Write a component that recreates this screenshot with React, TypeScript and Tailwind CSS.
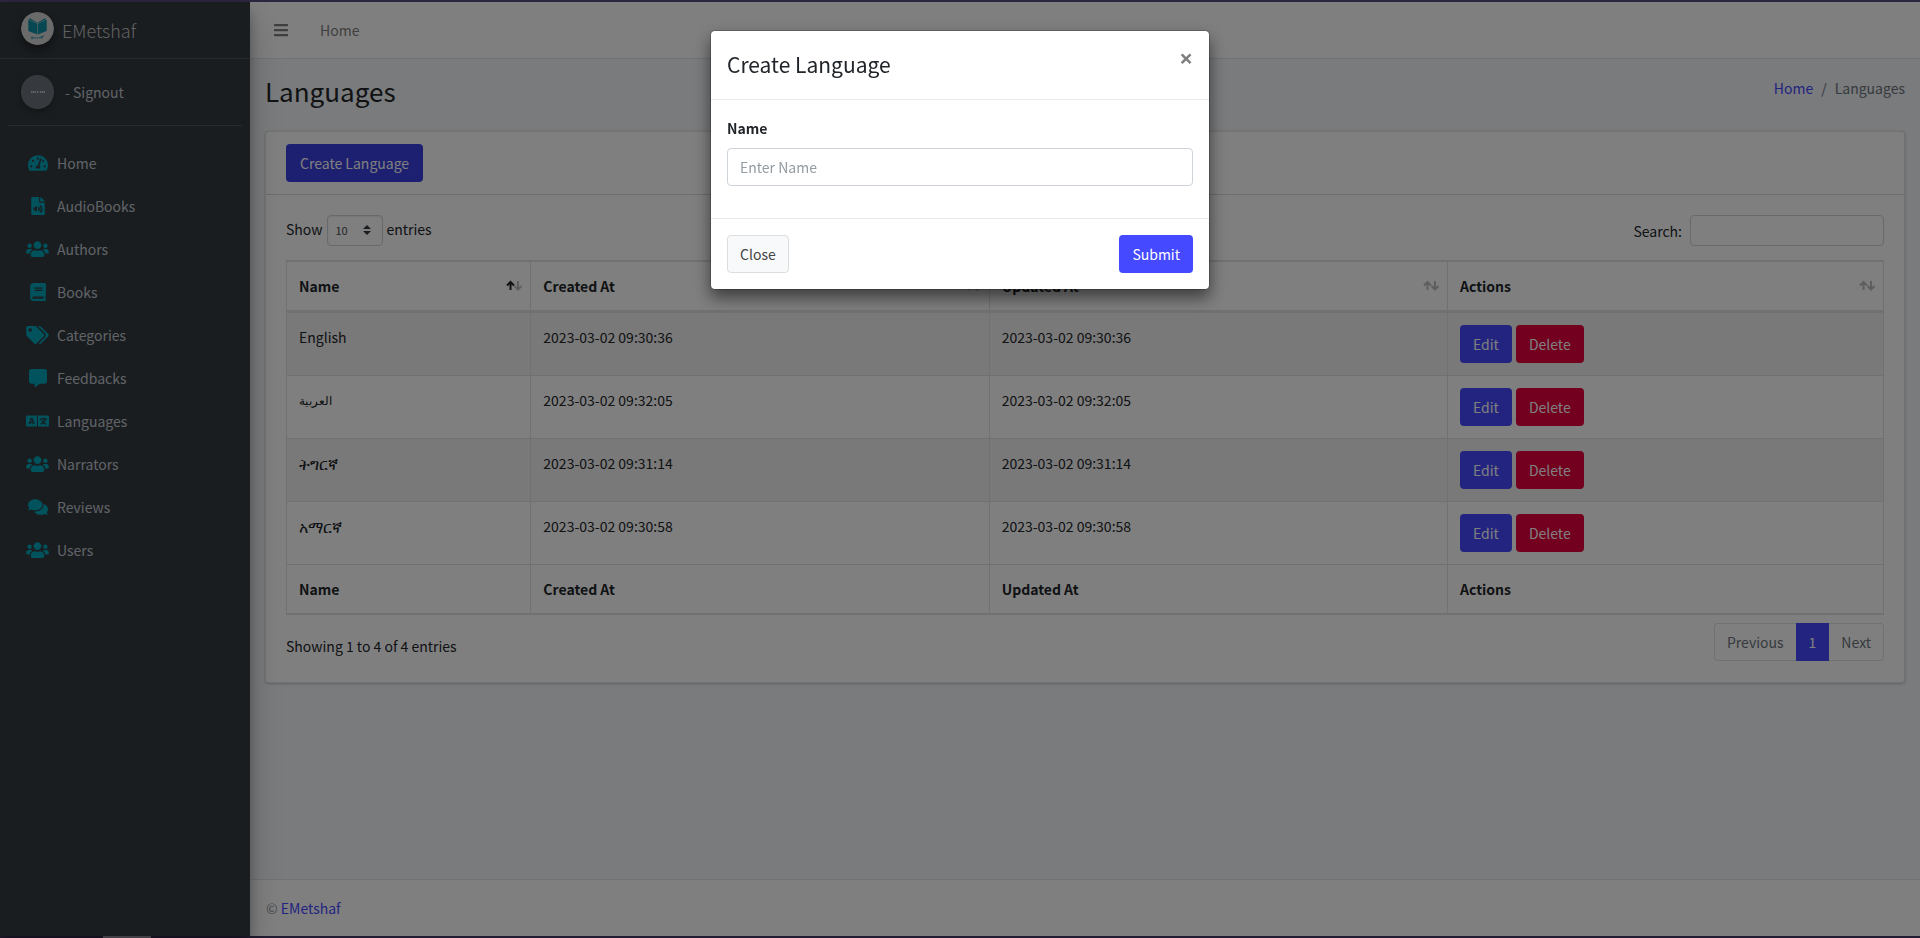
import {
  FaBars, FaBook, FaComments, FaFileAudio, FaTachometerAlt, FaTags, FaUsers,
} from 'react-icons/fa';
import { FaMessage } from 'react-icons/fa6';
import type { ComponentType } from 'react';

function LanguageBoxes({ className }: { className?: string }) {
  return (
    <svg className={className} viewBox="0 0 23 12" fill="currentColor" aria-hidden="true">
      <path
        fillRule="evenodd"
        d="M1 0.5h10v11H1a1 1 0 0 1-1-1v-9a1 1 0 0 1 1-1zM4.8 2.7 2.5 9.2h1.6l.4-1.2h2.2l.4 1.2h1.6L6.4 2.7zM5.6 4.5l.7 2.2H4.9z"
      />
      <path d="M12 .5h10a1 1 0 0 1 1 1v9a1 1 0 0 1-1 1H12z" />
      <path
        d="M17.4 2.4v1.5M14 4.2h6.9M19.3 4.4c-.5 2.200-2.100 3.900-4.700 4.800M15.700 5.600c.7 1.700 2.200 3 4.600 3.700"
        stroke="#343a40"
        strokeWidth="1.300"
        fill="none"
      />
    </svg>
  );
}

type Item = { label: string; icon: ComponentType<{ className?: string }>; size: string };

const items: Item[] = [
  { label: 'Home', icon: FaTachometerAlt, size: 'h-[18px] w-5' },
  { label: 'AudioBooks', icon: FaFileAudio, size: 'h-[18px] w-[18px]' },
  { label: 'Authors', icon: FaUsers, size: 'h-[18px] w-[23px]' },
  { label: 'Books', icon: FaBook, size: 'h-[18px] w-[18px]' },
  { label: 'Categories', icon: FaTags, size: 'h-[18px] w-[23px]' },
  { label: 'Feedbacks', icon: FaMessage, size: 'h-[18px] w-[18px]' },
  { label: 'Languages', icon: LanguageBoxes, size: 'h-3 w-[23px]' },
  { label: 'Narrators', icon: FaUsers, size: 'h-[18px] w-[23px]' },
  { label: 'Reviews', icon: FaComments, size: 'h-[18px] w-5' },
  { label: 'Users', icon: FaUsers, size: 'h-[18px] w-[23px]' },
];

const rows = [
  { name: 'English', date: '2023-03-02 09:30:36', size: 'text-sm leading-6' },
  { name: 'العربية', date: '2023-03-02 09:32:05', size: 'text-xs leading-6' },
  { name: 'ትግርኛ', date: '2023-03-02 09:31:14', size: 'text-base leading-6' },
  { name: 'አማርኛ', date: '2023-03-02 09:30:58', size: 'text-base leading-6' },
];

const columns = ['Name', 'Created At', 'Updated At', 'Actions'];

function Logo() {
  return (
    <svg className="h-[33px] w-[33px] rounded-full shadow-[0_6px_8px_rgba(0,0,0,0.4)]" viewBox="0 0 33 33" aria-hidden="true">
      <circle cx="16.5" cy="16.5" r="16.5" fill="#d5d5d5" />
      <path d="M7.300 7.500l1.200.5v-2l7.700 4.500v12L7.300 19zM25.700 7.500l-1.200.5v-2l-7.700 4.500v12l8.900-3.500z" fill="#0d8fa3" />
      <path d="M8.500 8l7.700 3.500M24.500 8l-7.700 3.500" stroke="#d5d5d5" strokeWidth="0.500" />
      <path
        d="M10 25.500c1-1.500 2-.5 1 .5s.5 1 1.500 0 1.500 0 2 0 1-1 1.500 0 1 0 1.500-.5 1 1 2 0 1-2 1.500-1-1 2.500-.5 1.500 1-2 2.500-2"
        stroke="#0d8fa3"
        strokeWidth="0.900"
        fill="none"
      />
    </svg>
  );
}

function SortArrows({ active }: { active: boolean }) {
  return (
    <svg className="h-3 w-4 shrink-0" viewBox="0 0 16 12" fill="none" stroke="#212529" strokeWidth="2" aria-hidden="true">
      <path d="M4.500 10V2M1 5.500l3.500-3.500L8 5.500" strokeOpacity={active ? 1 : 0.3} />
      <path d="M12 1v8.500M8.500 6L12 9.500 15.500 6" strokeOpacity="0.3" />
    </svg>
  );
}

function Sidebar() {
  return (
    <aside className="z-10 flex w-[250px] shrink-0 flex-col bg-[#343a40] text-[#c2c7d0] shadow-[0_14px_28px_rgba(0,0,0,0.25),0_10px_10px_rgba(0,0,0,0.22)]">
      <a href="#" className="flex h-[57px] items-center gap-2 border-b border-[#4b545c] pb-1 pl-[21px] text-lg text-white/70">
        <Logo />
        <span className="pt-1 font-light">EMetshaf</span>
      </a>
      <div className="mx-2 flex h-[67px] items-center gap-[11px] border-b border-[#4f5962] pl-[13px]">
        <span className="flex h-[34px] w-[33px] items-center justify-center rounded-full bg-[#6c757d] shadow-[0_3px_6px_rgba(0,0,0,0.3)]">
          <svg className="h-1 w-4" viewBox="0 0 16 4" aria-hidden="true">
            <path d="M1 2h5M7 2h2M10 2h5" stroke="#c2c7d0" strokeWidth="2" strokeDasharray="1.500 .5" />
          </svg>
        </span>
        <a href="#">- Signout</a>
      </div>
      <nav className="flex flex-col gap-[3px] px-2 pt-[17px]">
        {items.map(({ label, icon: Icon, size }) => (
          <a key={label} href="#" className="flex h-10 items-center gap-1.5 px-4">
            <span className="flex w-[27px] justify-center text-[#00a5b8]">
              <Icon className={size} />
            </span>
            <span>{label}</span>
          </a>
        ))}
      </nav>
    </aside>
  );
}

function Entries() {
  return (
    <section className="mx-[15px] rounded border border-black/10 bg-white shadow-[0_0_1px_rgba(0,0,0,0.13),0_1px_3px_rgba(0,0,0,0.2)]">
      <div className="border-b border-black/15 px-5 py-3">
        <button type="button" className="h-[38px] rounded bg-[#3b40e0] px-3.5 text-white">Create Language</button>
      </div>
      <div className="px-5 pt-5 pb-[21px]">
        <div className="flex items-center justify-between">
          <div className="flex items-center gap-1">
            <label htmlFor="length" className="pb-1">Show</label>
            <span className="relative flex">
              <select id="length" className="h-[31px] w-14 appearance-none rounded border border-[#ced4da] bg-white px-2 pb-0.5 text-[11px] text-[#495057] shadow-[inset_0_1px_2px_rgba(0,0,0,0.08)]">
                <option>10</option>
              </select>
              <svg className="pointer-events-none absolute top-[10px] right-3 h-[10px] w-2" viewBox="0 0 8 10" fill="#343a40" aria-hidden="true">
                <path d="M4 0L0 4h8zM4 10L0 6h8z" />
              </svg>
            </span>
            <span className="pb-1">entries</span>
          </div>
          <label className="flex items-center gap-2">
            Search:
            <input type="search" className="h-[31px] w-[194px] rounded border border-[#ced4da] bg-white px-2" />
          </label>
        </div>
        <table className="mt-[14px] w-full table-fixed border-separate border-spacing-0 border-t-2 border-r border-b-2 border-[#dee2e6] text-left">
          <colgroup>
            <col className="w-[15.300%]" />
            <col className="w-[28.700%]" />
            <col className="w-[28.700%]" />
            <col />
          </colgroup>
          <thead>
            <tr>
              {columns.map((name, i) => (
                <th key={name} className="h-[51px] border-b-3 border-l border-[#dee2e6] pr-2 pl-3 font-bold">
                  <span className="flex items-center justify-between">
                    {name}
                    <SortArrows active={i === 0} />
                  </span>
                </th>
              ))}
            </tr>
          </thead>
          <tbody>
            {rows.map(({ name, date, size }) => (
              <tr key={name} className="odd:bg-black/5">
                <td className="border-b border-l border-[#dee2e6] px-3 py-3 align-top">
                  <div className={size}>{name}</div>
                </td>
                <td className="border-b border-l border-[#dee2e6] px-3 py-3 align-top">{date}</td>
                <td className="border-b border-l border-[#dee2e6] px-3 py-3 align-top">{date}</td>
                <td className="border-b border-l border-[#dee2e6] px-3 py-3">
                  <div className="flex gap-1">
                    <button type="button" className="h-[38px] rounded bg-[#4549ff] px-[13px] text-white">Edit</button>
                    <button type="button" className="h-[38px] rounded bg-[#e6003c] px-[13px] text-white">Delete</button>
                  </div>
                </td>
              </tr>
            ))}
          </tbody>
          <tfoot>
            <tr>
              {columns.map((name) => (
                <th key={name} className="h-12 border-l border-[#dee2e6] px-3 font-bold">{name}</th>
              ))}
            </tr>
          </tfoot>
        </table>
        <div className="mt-2 flex items-center justify-between">
          <p className="pt-2">Showing 1 to 4 of 4 entries</p>
          <div className="flex h-[38px] text-[#6c757d]">
            <button type="button" className="rounded-l border border-r-0 border-[#dee2e6] px-3">Previous</button>
            <button type="button" className="bg-[#4549ff] px-[13px] text-white">1</button>
            <button type="button" className="rounded-r border border-l-0 border-[#dee2e6] px-3">Next</button>
          </div>
        </div>
      </div>
    </section>
  );
}

function CreateDialog() {
  return (
    <div className="fixed inset-x-0 top-0.5 bottom-0.5 z-20 flex items-start justify-center bg-black/50 pt-7">
      <div role="dialog" aria-labelledby="dialog-title" className="w-[500px] rounded-[5px] border border-black/20 bg-white bg-clip-padding shadow-[0_8px_16px_rgba(0,0,0,0.5)]">
        <div className="flex h-[69px] items-start justify-between border-b border-[#e9ecef] px-4 pt-[15px]">
          <h2 id="dialog-title" className="text-[21px] leading-9">Create Language</h2>
          <button type="button" aria-label="Close dialog" className="font-['Open_Sans',sans-serif] text-2xl leading-6 font-bold text-[#7f7f7f]">×</button>
        </div>
        <div className="border-b border-[#e9ecef] px-4 pt-4 pb-8">
          <label htmlFor="name" className="mb-2 block font-bold">Name</label>
          <input id="name" placeholder="Enter Name" className="h-[38px] w-full rounded border border-[#ced4da] px-3 placeholder:text-[#939ba2]" />
        </div>
        <div className="flex justify-between px-4 py-4">
          <button type="button" className="h-[38px] rounded border border-[#ddd] bg-[#f8f9fa] px-3 text-[#444]">Close</button>
          <button type="button" className="h-[38px] rounded bg-[#4549ff] px-[13px] text-white">Submit</button>
        </div>
      </div>
    </div>
  );
}

export default function App() {
  return (
    <div className="flex min-h-screen flex-col bg-[#f4f6f9] font-['Noto_Sans_CJK_SC','Noto_Sans',sans-serif] text-sm leading-6 text-[#212529]">
      <div className="h-0.5 bg-[#2d2640]" />
      <div className="flex flex-1">
        <Sidebar />
        <div className="flex min-w-0 flex-1 flex-col">
          <header className="flex h-[57px] items-center gap-8 border-b border-[#dee2e6] bg-white px-6 text-[#7f7f7f]">
            <button type="button" aria-label="Toggle menu"><FaBars className="h-4 w-[14px]" /></button>
            <a href="#">Home</a>
          </header>
          <main className="flex-1">
            <div className="flex h-[72px] items-start justify-between px-[15px] pt-[14px]">
              <h1 className="text-[26px] leading-9">Languages</h1>
              <nav aria-label="Breadcrumb" className="flex gap-2 pt-[3px] text-[#6c757d]">
                <a href="#" className="text-[#4549ff]">Home</a>
                <span>/</span>
                <span>Languages</span>
              </nav>
            </div>
            <Entries />
          </main>
          <footer className="flex h-[57px] items-center border-t border-[#dee2e6] bg-white px-4 text-[#869099]">
            <p>© <a href="#" className="text-[#4549ff]">EMetshaf</a></p>
          </footer>
        </div>
      </div>
      <div className="flex h-0.5 bg-[#231d33]">
        <div className="ml-[103px] w-12 bg-[#6a6672]" />
      </div>
      <CreateDialog />
    </div>
  );
}
